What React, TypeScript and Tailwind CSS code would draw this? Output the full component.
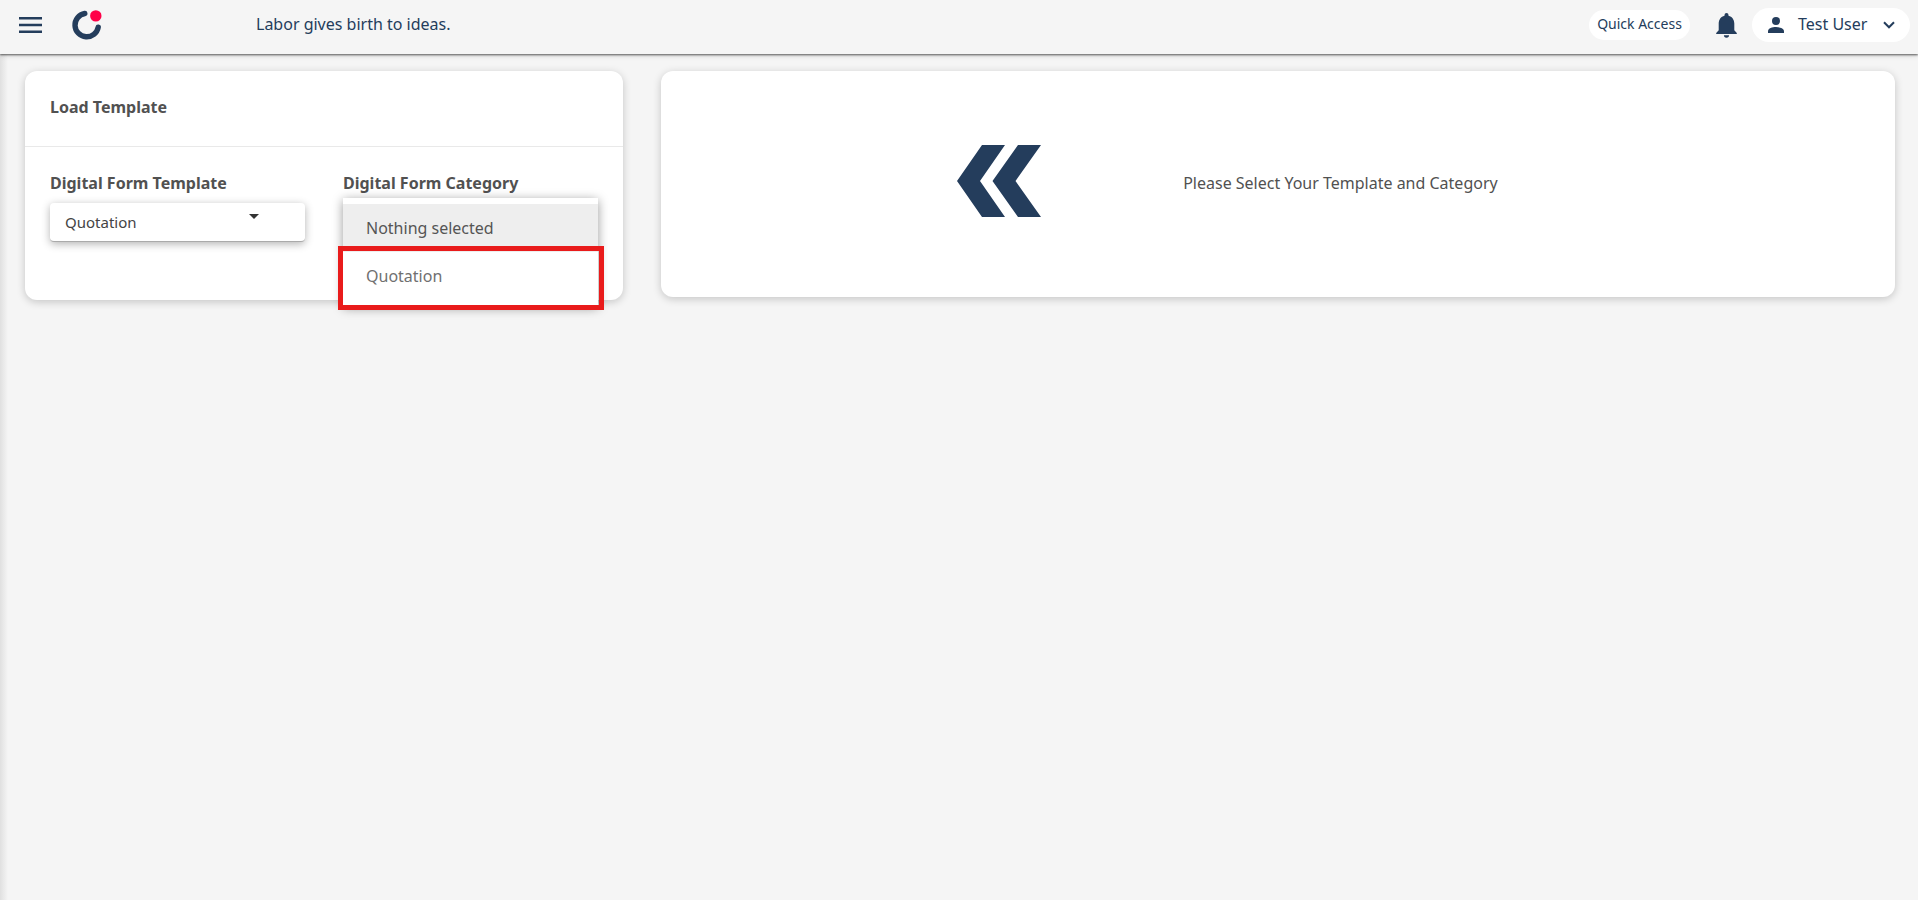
import { useState } from "react";

const categories = ["Nothing selected", "Quotation"];

function Logo() {
  return (
    <svg viewBox="0 0 32 32" className="size-8" role="img" aria-label="Home">
      <path d="M13.800 4.500A11.700 11.700 0 1 0 27.200 18.200" fill="none" stroke="#243d5c" strokeWidth="5.400" strokeLinecap="round" />
      <circle cx="24.800" cy="6.900" r="5.700" fill="#ff0048" />
    </svg>
  );
}

function Header() {
  return (
    <header className="relative z-10 flex h-[54px] items-center bg-[#f5f5f5] pr-2 pb-1 pl-[19px] text-[#243d5c] shadow-[0_1px_2px_rgba(0,0,0,0.6),0_1px_6px_rgba(0,0,0,0.15)]">
      <button type="button" aria-label="Toggle menu">
        <svg viewBox="0 0 23 16" className="h-4 w-[23px]" fill="currentColor">
          <path d="M0 0h23v2.600H0zM0 6.700h23v2.600H0zM0 13.400h23V16H0z" />
        </svg>
      </button>
      <a href="#" className="ml-[29px]">
        <Logo />
      </a>
      <p className="ml-[153px] pb-[2px] text-[16px] leading-6">Labor gives birth to ideas.</p>
      <div className="ml-auto flex items-center">
        <button type="button" className="flex h-[30px] w-[101px] items-center justify-center rounded-full bg-white pb-[2px] text-[14px] leading-5">
          Quick Access
        </button>
        <button type="button" aria-label="Notifications" className="ml-[26px]">
          <svg viewBox="0 0 21 25" className="h-[25px] w-[21px]" fill="currentColor">
            <path d="M10.500 0a2 2 0 0 1 2 2v.7c3.700.9 5.800 4 5.800 7.800v6.700l2.500 2.700v1.100H.2v-1.100l2.500-2.700v-6.700c0-3.800 2.100-6.900 5.800-7.800V2a2 2 0 0 1 2-2Z" />
            <path d="M7.900 22.300h5.200a2.600 2.400 0 0 1-5.200 0Z" />
          </svg>
        </button>
        <button type="button" className="ml-[15px] flex h-[34px] w-[158px] items-center rounded-full bg-white pr-[15px] pl-[16px] text-[16px] leading-6">
          <svg viewBox="0 0 16 16" className="size-4" fill="currentColor" aria-hidden="true">
            <circle cx="8" cy="4" r="4" />
            <path d="M0 16v-1.800C0 11.300 4.400 10 8 10s8 1.300 8 4.200V16Z" />
          </svg>
          <span className="ml-[14px] pb-[2px] whitespace-nowrap">Test User</span>
          <svg viewBox="0 0 12 8" className="ml-auto h-2 w-3" fill="none" stroke="currentColor" strokeWidth="2" aria-hidden="true">
            <path d="M1 1.300 6 6.300l5-5" />
          </svg>
        </button>
      </div>
    </header>
  );
}

function TemplateField() {
  return (
    <div className="min-w-0 flex-1">
      <label htmlFor="template" className="block text-[16px] leading-6 font-bold">
        Digital Form Template
      </label>
      <div className="relative mt-[8px]">
        <select
          id="template"
          defaultValue="Quotation"
          className="h-[39px] w-full appearance-none rounded-[4px] border-b border-[#aaa] bg-white px-[15px] text-[15px] text-[#444] shadow-[0_2px_8px_rgba(0,0,0,0.3)]"
        >
          <option>Quotation</option>
        </select>
        <svg viewBox="0 0 10 5" className="pointer-events-none absolute top-[11px] right-[46px] h-[5px] w-[10px]" fill="#333" aria-hidden="true">
          <path d="M0 0h10L5 5Z" />
        </svg>
      </div>
    </div>
  );
}

function CategoryField() {
  const [selected, setSelected] = useState(categories[0]);
  return (
    <div className="min-w-0 flex-1">
      <p id="category-label" className="text-[16px] leading-6 font-bold">
        Digital Form Category
      </p>
      <div className="relative mt-[3px]">
        <div
          role="listbox"
          aria-labelledby="category-label"
          className="absolute inset-x-0 top-0 z-10 bg-white py-[6px] shadow-[0_2px_10px_rgba(0,0,0,0.4)]"
        >
          {categories.map((name) => (
            <button
              key={name}
              type="button"
              role="option"
              aria-selected={name === selected}
              onClick={() => setSelected(name)}
              className="block h-[48px] w-full bg-white px-[23px] text-left text-[16px] leading-6 text-[#707070] aria-selected:bg-[#eee] aria-selected:text-[#555]"
            >
              {name}
            </button>
          ))}
          <div className="pointer-events-none absolute top-[48px] -right-[6px] -bottom-[4px] -left-[5px] border-[5px] border-[#e91b1b]" />
        </div>
      </div>
    </div>
  );
}

export default function App() {
  return (
    <div className="flex min-h-screen flex-col bg-[#f5f5f5] font-['Noto_Sans',sans-serif] text-[#515151]">
      <Header />
      <main className="grid flex-1 grid-cols-3 items-start gap-[38px] bg-[linear-gradient(to_right,#e0e0e0,#f5f5f5_8px)] pt-[17px] pr-[23px] pb-8 pl-[25px]">
        <section className="rounded-[12px] bg-white shadow-[0_2px_8px_rgba(0,0,0,0.2)]">
          <h1 className="border-b border-[#e9e9e9] px-[25px] pt-[24px] pb-[27px] text-[16px] leading-6 font-bold">Load Template</h1>
          <div className="flex gap-[38px] px-[25px] pt-[24px] pb-[58px]">
            <TemplateField />
            <CategoryField />
          </div>
        </section>
        <section className="col-span-2 rounded-[12px] bg-white pt-[74px] pb-[80px] shadow-[0_2px_8px_rgba(0,0,0,0.2)]">
          <div className="flex items-center pl-[24%]">
            <svg viewBox="0 0 84 72" className="h-[72px] w-[84px]" fill="#243d5c" aria-hidden="true">
              <path d="M0 36 25 0h23L23 36l25 36H25Z" />
              <path d="M35.500 36 61 0h23L58.500 36 84 72H61Z" />
            </svg>
            <p className="ml-[142px] pt-1 text-[16px] leading-6">Please Select Your Template and Category</p>
          </div>
        </section>
      </main>
    </div>
  );
}
